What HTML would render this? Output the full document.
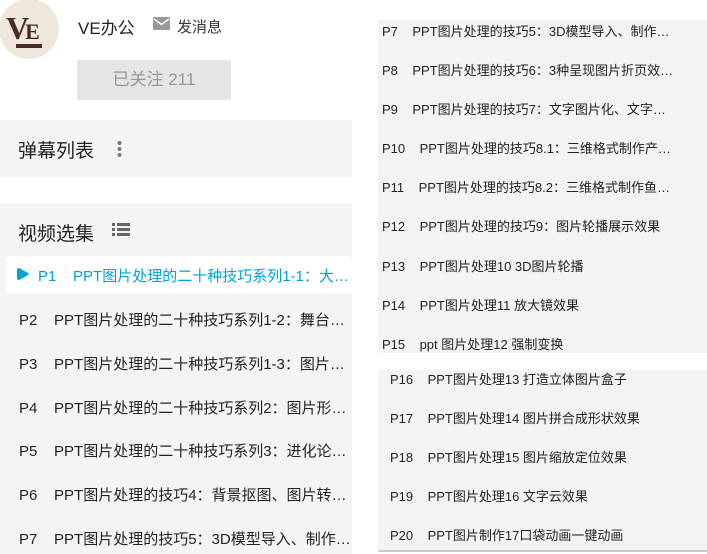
<!DOCTYPE html>
<html><head><meta charset="utf-8"><style>
*{margin:0;padding:0;box-sizing:border-box}
body{width:707px;height:554px;overflow:hidden;background:#fff;font-family:"Liberation Sans","Noto Sans CJK SC",sans-serif;position:relative;color:#222}
.a{position:absolute}
.row{position:absolute;font-size:15px;color:#222;white-space:nowrap}
.r2{position:absolute;font-size:13px;color:#222;white-space:nowrap}
</style></head><body>
<div class="a" style="left:-1px;top:-1px;width:60px;height:60px;border-radius:50%;background:#efe6dc"></div>
<div class="a" style="left:6px;top:10px;font-family:'Liberation Serif',serif;font-size:32px;color:#4a2a26;letter-spacing:-4px;font-weight:bold">V<span style="font-size:22px">E</span></div>
<div class="a" style="left:16px;top:44px;width:26px;height:4px;background:#4a2a26"></div>
<div class="a" style="left:78px;top:14px;font-size:17px;color:#222">VE办公</div>
<svg class="a" style="left:153px;top:17px" width="17" height="13" viewBox="0 0 17 13"><rect width="17" height="13" rx="1" fill="#999"/><path d="M1 2l7.5 5.5L16 2" stroke="#fff" stroke-width="1.5" fill="none"/></svg>
<div class="a" style="left:177px;top:16px;font-size:15px;color:#333">发消息</div>
<div class="a" style="left:77px;top:60px;width:154px;height:40px;background:#e5e5e5;border-radius:2px;color:#999;font-size:17px;text-align:center;line-height:40px">已关注 211</div>
<div class="a" style="left:0;top:120px;width:352px;height:57px;background:#f4f4f4"></div>
<div class="a" style="left:18px;top:136px;font-size:19px;color:#222">弹幕列表</div>
<div class="a" style="left:117px;top:140px;width:5px;height:18px;background:radial-gradient(circle,#777 1.8px,transparent 2.2px) 0 0/5px 6px"></div>
<div class="a" style="left:0;top:203px;width:352px;height:351px;background:#f4f4f4"></div>
<div class="a" style="left:18px;top:219px;font-size:19px;color:#222">视频选集</div>
<div class="a" style="left:112px;top:223px;width:18px;height:14px;background:repeating-linear-gradient(#666 0 3px,transparent 3px 5px)"></div>
<div class="a" style="left:112px;top:223px;width:2px;height:14px;background:#f4f4f4;margin-left:3px"></div>
<div class="a" style="left:6px;top:256px;width:346px;height:38px;background:#fff;border-radius:4px"></div>
<svg class="a" style="left:17px;top:267px" width="12" height="14" viewBox="0 0 12 14"><path d="M2 1Q0 1 0 3v8q0 2 2 2l9-5q1.5-1 0-2z" fill="#00a1d6"/></svg>
<div class="row" style="left:38px;top:265px;color:#00a1d6">P1&nbsp;&nbsp;&nbsp;&nbsp;PPT图片处理的二十种技巧系列1-1：大…</div>
<div class="row" style="left:19px;top:309px">P2&nbsp;&nbsp;&nbsp;&nbsp;PPT图片处理的二十种技巧系列1-2：舞台…</div>
<div class="row" style="left:19px;top:353px">P3&nbsp;&nbsp;&nbsp;&nbsp;PPT图片处理的二十种技巧系列1-3：图片…</div>
<div class="row" style="left:19px;top:397px">P4&nbsp;&nbsp;&nbsp;&nbsp;PPT图片处理的二十种技巧系列2：图片形…</div>
<div class="row" style="left:19px;top:440px">P5&nbsp;&nbsp;&nbsp;&nbsp;PPT图片处理的二十种技巧系列3：进化论…</div>
<div class="row" style="left:19px;top:484px">P6&nbsp;&nbsp;&nbsp;&nbsp;PPT图片处理的技巧4：背景抠图、图片转…</div>
<div class="row" style="left:19px;top:528px">P7&nbsp;&nbsp;&nbsp;&nbsp;PPT图片处理的技巧5：3D模型导入、制作…</div>
<div class="a" style="left:378px;top:20px;width:329px;height:333px;background:#f3f3f3"></div>
<div class="r2" style="left:382px;top:21px">P7&nbsp;&nbsp;&nbsp;&nbsp;PPT图片处理的技巧5：3D模型导入、制作…</div>
<div class="r2" style="left:382px;top:60px">P8&nbsp;&nbsp;&nbsp;&nbsp;PPT图片处理的技巧6：3种呈现图片折页效…</div>
<div class="r2" style="left:382px;top:99px">P9&nbsp;&nbsp;&nbsp;&nbsp;PPT图片处理的技巧7：文字图片化、文字…</div>
<div class="r2" style="left:382px;top:138px">P10&nbsp;&nbsp;&nbsp;&nbsp;PPT图片处理的技巧8.1：三维格式制作产…</div>
<div class="r2" style="left:382px;top:177px">P11&nbsp;&nbsp;&nbsp;&nbsp;PPT图片处理的技巧8.2：三维格式制作鱼…</div>
<div class="r2" style="left:382px;top:216px">P12&nbsp;&nbsp;&nbsp;&nbsp;PPT图片处理的技巧9：图片轮播展示效果</div>
<div class="r2" style="left:382px;top:256px">P13&nbsp;&nbsp;&nbsp;&nbsp;PPT图片处理10 3D图片轮播</div>
<div class="r2" style="left:382px;top:295px">P14&nbsp;&nbsp;&nbsp;&nbsp;PPT图片处理11 放大镜效果</div>
<div class="r2" style="left:382px;top:334px">P15&nbsp;&nbsp;&nbsp;&nbsp;ppt 图片处理12 强制变换</div>
<div class="a" style="left:378px;top:370px;width:329px;height:182px;background:#f3f3f3;border-bottom:2px solid #ccc"></div>
<div class="r2" style="left:390px;top:369px">P16&nbsp;&nbsp;&nbsp;&nbsp;PPT图片处理13 打造立体图片盒子</div>
<div class="r2" style="left:390px;top:408px">P17&nbsp;&nbsp;&nbsp;&nbsp;PPT图片处理14 图片拼合成形状效果</div>
<div class="r2" style="left:390px;top:447px">P18&nbsp;&nbsp;&nbsp;&nbsp;PPT图片处理15 图片缩放定位效果</div>
<div class="r2" style="left:390px;top:486px">P19&nbsp;&nbsp;&nbsp;&nbsp;PPT图片处理16 文字云效果</div>
<div class="r2" style="left:390px;top:525px">P20&nbsp;&nbsp;&nbsp;&nbsp;PPT图片制作17口袋动画一键动画</div>
</body></html>
